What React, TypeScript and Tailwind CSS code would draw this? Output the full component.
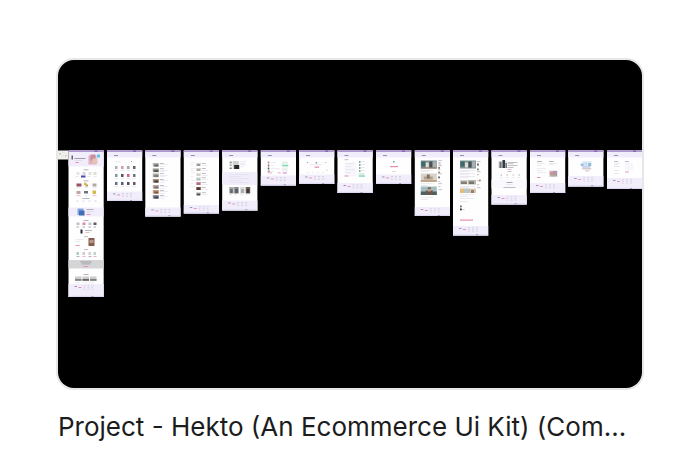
type Mark = [x: number, y: number, w: number, h: number, fill: string];

interface Frame {
  x: number;
  height: number;
  footer: number;
  header?: number;
  marks: Mark[];
}

const INK = "#96959f";
const SOFT = "#dcdbe4";
const PINK = "#e58db4";
const LAV = "#f1edfb";

const dots = (xs: number[], y: number, w: number, h: number, fills: string[]): Mark[] =>
  xs.map((x, i): Mark => [x, y, w, h, fills[i % fills.length]]);

const lines = (x: number, ys: number[], w: number, fill: string): Mark[] =>
  ys.map((y, i): Mark => [x, y, i % 2 ? w * 0.6 : w, 0.6, fill]);

const frames: Frame[] = [
  {
    x: 68.5, height: 146.5, footer: 133.5, header: 16,
    marks: [
      [3, 5, 1.5, 4, "#65636e"], [6, 7.5, 11, 0.9, INK], [6, 9.5, 8, 0.8, SOFT], [7, 11.5, 3.5, 0.9, PINK],
      [20, 5, 8, 9, "#dfb3bd"], [22, 4, 5, 6, "#c78e9f"], [24, 8, 5, 5, "#e9c4b5"], [28.5, 4, 3, 3, "#5cc3ea"],
      [15, 19, 5, 0.7, INK],
      ...dots([8, 14, 20, 25], 21.5, 3, 3, ["#e3e3e8", "#d2d6df", "#e4e1d9", "#d9e0d8"]),
      [12.5, 25, 4.5, 2, "#4a4aae"], ...dots([7, 19, 25], 25.5, 3, 0.6, [SOFT]),
      [15, 30, 5, 0.7, INK],
      [8, 33, 5, 3, "#9b5260"], [15.5, 32, 2.5, 2.5, "#d8bb4f"], [17, 34, 2.5, 2, "#b89d48"], [24, 33, 4, 3, "#b4aba0"],
      [8, 40.5, 4, 3, "#bba7a1"], [15.5, 40.5, 4, 2.5, "#73707c"], [24, 40, 3.5, 3.5, "#d8b74e"],
      ...dots([8, 16, 24], 37, 4, 0.6, [SOFT]), ...dots([8, 16, 24], 45, 4, 0.6, [PINK, SOFT]),
      [14, 47.5, 7, 0.7, INK], ...dots([8, 14, 20, 26], 50, 2, 1.2, [SOFT]),
      [0, 57, 35, 9, LAV], [9, 58, 6, 6.5, "#8aa6df"], [10.5, 60, 5.5, 5, "#416db6"],
      [18, 58.5, 7, 0.7, INK], ...lines(18, [60.5, 62], 7, SOFT), [18, 63.5, 4, 0.9, PINK],
      [15, 69.5, 5, 0.7, INK], ...dots([8, 14, 20, 25], 72, 3, 2.5, ["#bbc3ca", "#df8aa0", "#c2c7ca", "#5f5764"]),
      ...dots([8, 14, 20, 25], 76, 2.5, 1, ["#a9a8b5"]),
      [12, 79, 2, 4, "#292934"], [16.5, 79.5, 7, 0.7, INK], [17, 81.5, 4, 0.8, "#e2b09a"],
      [15.5, 86, 4, 0.6, INK], ...lines(7, [88.5, 90.5], 8, SOFT), [7, 94.5, 4, 0.9, PINK],
      [20, 87.5, 6, 8, "#865c51"], [21, 89.5, 4, 3, "#bd9885"],
      [15.5, 98.5, 4, 0.6, INK], ...dots([8, 14, 20, 25], 101.5, 2.5, 3, ["#a8d0ba", "#d0cdc8", "#d6cfd9", "#bcd5c6"]),
      ...dots([8, 14, 20, 25], 105.5, 3, 0.7, [INK, PINK]),
      [0, 109.5, 35, 8.5, "#d5d5d8"], [12, 111, 11, 0.9, "#9a979e"], [13, 113, 9, 0.8, "#9a979e"], [15, 115.5, 4.5, 0.9, PINK],
      [15, 123.5, 5, 0.7, INK],
      ...dots([6.5, 14, 21.5], 126, 6.5, 4.5, ["#cbcaca"]),
      ...dots([6.5, 14, 21.5], 128.5, 6.5, 1.8, ["#84848a", "#66646b", "#818083"]),
      ...dots([7, 15, 22], 132, 4, 0.6, [SOFT]),
    ],
  },
  {
    x: 107, height: 50.5, footer: 41,
    marks: [
      [8, 11, 6, 0.6, SOFT], [24, 10.5, 1, 1, INK],
      ...dots([8, 14, 20, 26], 15.5, 2.5, 3, ["#abb0b0", "#d39aa2", "#a2a4ae", "#65606c"]),
      ...dots([8, 14, 20, 26], 23.5, 2.5, 3, ["#789c96", "#55505d", "#d45e7d", "#6e737d"]),
      ...dots([8, 14, 20, 26], 31.5, 2.5, 3, ["#65708a", "#545c6e", "#4f525e", "#6b556a"]),
      ...dots([7.5, 13.5, 19.5, 25.5], 19.5, 3.5, 0.6, [SOFT]), ...dots([7.5, 13.5, 19.5, 25.5], 27.5, 3.5, 0.6, [SOFT]),
      ...dots([7.5, 13.5, 19.5, 25.5], 35.5, 3.5, 0.6, [SOFT]),
    ],
  },
  {
    x: 145.3, height: 66, footer: 57,
    marks: [
      ...[12.5, 18, 23, 28.5, 34.5, 39.5, 44.5].flatMap((y, i): Mark[] => [
        [7.5, y, 6, 3.7, ["#b2b5b0", "#8a9492", "#a4b1aa", "#a98d79", "#b9a8a4", "#c39b7c", "#8d8f98"][i]],
        [9, y + 1.5, 4, 2, ["#636762", "#635149", "#80786c", "#423c37", "#7c6d6b", "#7f5b41", "#3e4251"][i]],
        [14.5, y, 4, 0.6, INK], [14.5, y + 1.5, 8, 0.5, SOFT], [14.5, y + 3, 5, 0.5, SOFT],
      ]),
    ],
  },
  {
    x: 183.8, height: 63, footer: 54.5,
    marks: [
      ...lines(7, [12, 14, 18, 20, 22, 26, 30, 33, 36], 4, SOFT),
      ...[12.5, 17.5, 22.5, 27, 31.5, 36.5, 42].flatMap((y, i): Mark[] => [
        [12.5, y, 4.5, 3, ["#cdd3cd", "#d3d0ca", "#e6e2dd", "#cdd3d1", "#c58d97", "#794a39", "#aeadae"][i]],
        [13, y + 1.2, 3.2, 1.6, ["#87918a", "#aaa69f", "#d2cbbb", "#aeb9ba", "#a3727a", "#503930", "#494b4b"][i]],
        [18, y, 4, 0.6, INK], [18, y + 2, 6, 0.5, SOFT],
      ]),
    ],
  },
  {
    x: 222.2, height: 60, footer: 50,
    marks: [
      [7.5, 11, 2, 2, "#8a9092"], [7.5, 14, 2, 1.5, "#a19f9e"], [7.5, 17, 2, 1.5, "#777978"],
      [10.5, 10.5, 6, 8, "#cdd3cc"], [12, 14.5, 5, 4, "#25272b"],
      ...lines(18, [11, 12.5, 14, 16], 6, SOFT), [0, 21.5, 35, 13, LAV],
      ...lines(7, [23.5, 25.5, 27.5, 29.5, 31.5], 20, "#dfdcea"),
      ...dots([7, 12, 18, 23.5], 36.5, 4.5, 6.5, ["#a6aaa8", "#858a90", "#d6d9d7", "#735e50"]),
      ...dots([8, 13, 19, 24.5], 38.5, 2.5, 4, ["#656a6f", "#595860", "#a6a9a8", "#37373b"]),
      ...dots([7, 12, 18, 23.5], 44, 3, 0.6, [SOFT]),
    ],
  },
  {
    x: 260.8, height: 35, footer: 25,
    marks: [
      [7, 11, 1.5, 2, INK], [7, 14, 1.5, 2, "#9c6e68"], [7, 17, 1.5, 2, "#515c55"], [7, 20, 2, 1.5, "#9c9a88"],
      ...lines(10, [12, 15, 18, 21], 5, SOFT), [15, 18, 4, 0.6, SOFT],
      [21, 11, 6, 5, "#ddf3e9"], [21.5, 14.5, 6, 1.3, "#86d7b5"], [21, 17, 6, 4, "#edf0ee"],
      [7, 22, 4, 0.8, PINK], [17, 22, 3, 0.8, PINK], [22, 22, 4, 1, "#b980bd"],
    ],
  },
  {
    x: 299.1, height: 33.5, footer: 24,
    marks: [
      [8, 11.5, 1, 1, INK], [16.5, 11.5, 1.5, 1.5, "#8a9a94"], [26, 11.5, 1, 1, PINK],
      [11, 14, 12, 0.6, SOFT], [15.5, 16, 4.5, 1.3, PINK], [27, 19, 1.5, 1.5, SOFT], ...dots([8, 13, 18, 23], 21.5, 2, 0.6, [SOFT]),
    ],
  },
  {
    x: 337.5, height: 42.5, footer: 32.5,
    marks: [
      [7, 9, 4, 0.6, INK], [7, 12, 12, 14, "#f7f6fc"], ...lines(8, [13, 16, 19, 22], 9, SOFT), [7, 25, 4, 1, PINK],
      ...[10.5, 13.5, 16.5, 19.5].flatMap((y): Mark[] => [[21.5, y, 1.5, 2, "#8fa39b"], [23.5, y, 4, 0.6, SOFT]]),
      [21, 22.5, 6, 3.5, "#d8f0e4"], [21.5, 25, 6, 1.2, "#7dd4ae"],
    ],
  },
  {
    x: 376, height: 33.5, footer: 24,
    marks: [[17, 10.5, 1.5, 1.5, "#7e9e96"], [14, 15.5, 8, 1.2, PINK], [16, 20.5, 4, 0.6, "#e4b9ce"]],
  },
  {
    x: 414.8, height: 65.5, footer: 56.5,
    marks: [
      [6, 10, 16, 8, "#7a9192"], [6.5, 11, 4, 5, "#3f676d"], [11, 12, 3, 5, "#e0dcd6"], [14.5, 11, 3, 6, "#4b5257"], [18, 11, 3.5, 6, "#a9b0af"], [6, 17, 16, 1, "#9c7460"],
      [6, 23, 16, 8.5, "#d9d2c9"], [9, 26, 9, 3, "#b3a08d"], [12, 24, 3, 4, "#7f7469"], [6, 29.5, 16, 2, "#c0a688"],
      [6, 36, 16, 8.5, "#a3bec1"], [6, 41, 16, 3.5, "#4d6064"], [11, 40, 7, 4.5, "#6b5850"], [13, 38, 3, 3, "#c99b82"], [13, 37, 3, 1.2, "#5c3f32"],
      ...lines(6, [19.5, 21, 33, 34.5, 46.5, 48.5], 12, SOFT),
      ...lines(23.5, [10, 12, 15, 19, 23, 31, 33, 36, 39], 3.5, INK), [23.5, 13, 2.5, 0.9, PINK],
      [23.5, 16.5, 1.5, 1.8, "#655d5b"], [23.5, 21, 1.5, 1.8, "#867d6b"], [23.5, 26, 1.5, 1.8, "#40424b"],
    ],
  },
  {
    x: 453, height: 85, footer: 75.5,
    marks: [
      [7, 10, 16, 8, "#7a9192"], [7.5, 11, 4, 5, "#3f676d"], [12, 12, 3, 5, "#e0dcd6"], [15.5, 11, 3, 6, "#4b5257"], [19, 11, 3.5, 6, "#a9b0af"],
      ...lines(7, [19.5, 21, 22.5, 24, 25.5, 27], 15, SOFT),
      [7, 29.5, 7.5, 4.5, "#d1cdc8"], [8, 31, 6, 2.5, "#867d76"], [15, 29.5, 8, 4.5, "#b8b7ab"], [16, 31, 5, 2.5, "#75766f"],
      ...lines(7, [35.5, 36.5], 15, SOFT),
      [7, 38, 4, 4.5, "#e3bb7f"], [11, 38, 6, 4.5, "#b9c4c4"], [17, 38, 6, 4.5, "#dac9b0"], [18, 39.5, 3, 3, "#9b7d70"],
      ...lines(7, [44, 45.5, 47.5, 51], 14, SOFT),
      [7, 55, 1.8, 1.8, "#747078"], [7, 58, 1.8, 1.8, "#292b31"], [9.5, 58.5, 2, 0.7, PINK],
      [7, 69, 13, 1.2, PINK],
      ...lines(24, [11, 15, 21, 24, 30, 34, 37], 3.5, INK), [24, 13, 1.8, 1.8, "#655d5b"], [24, 18, 1.8, 1.8, "#867d6b"], [26, 29, 1.8, 1.8, "#bf8985"],
    ],
  },
  {
    x: 491.5, height: 54, footer: 44.5,
    marks: [
      [7, 10.5, 8, 7, "#d1d5d8"], [8, 11.5, 2, 6, "#6c7077"], [11, 9.5, 2.5, 8, "#35383e"], [14, 12.5, 1.5, 5, "#74777b"],
      ...lines(16, [11.5, 13, 14.5, 16.5], 10, INK), [16, 18.5, 4, 0.7, PINK],
      [16, 20.5, 4, 0.6, INK], ...dots([9, 15, 21, 27], 23.5, 1.5, 2, ["#cbd7dd", "#eed4c4", "#ecd8d3", "#cbded3"]),
      ...dots([8, 14, 20, 26], 26.5, 3, 0.6, [SOFT]), [0, 29, 35, 9, "#faf9fe"], [15, 31.5, 6, 0.8, INK], [15, 33.5, 6, 0.6, SOFT], [12, 36.5, 12, 0.6, INK],
    ],
  },
  {
    x: 530, height: 42.5, footer: 32.5,
    marks: [
      [7, 10.5, 5, 0.7, INK], ...lines(7, [12.5, 14.5], 8, SOFT), [19, 10.5, 5, 0.7, INK], ...lines(19, [12.5, 14], 8, SOFT),
      ...lines(7, [18, 20, 22], 9, SOFT), [7, 26.5, 3.5, 1, PINK],
      [19, 20, 8.5, 6.5, "#e0d2de"], [20, 21, 3, 4, "#cb9492"], [23, 20.5, 4, 5, "#b494b4"], [21, 24.5, 5, 1.5, "#a9b586"],
    ],
  },
  {
    x: 568.2, height: 36, footer: 25.5,
    marks: [
      [14, 10.5, 9, 6, "#e0edf8"], [12.5, 13, 3, 2.5, "#9cc0df"], [16, 12, 3, 3, "#c5deef"], [20, 12.5, 3, 3, "#90bbd2"],
      [14, 16, 8, 1, "#a5b3dc"], [14, 18, 9, 0.7, INK], [17, 20, 4, 0.7, PINK],
    ],
  },
  {
    x: 607, height: 38.5, footer: 27.5,
    marks: [
      [7, 10.5, 4, 0.6, INK], ...lines(7, [12.5, 14, 15.5], 6, SOFT), [18, 10.5, 4, 0.6, INK], [18, 12, 8, 8, "#f7f6fc"],
      [7, 19.5, 5, 0.7, SOFT], [18, 21, 4, 0.9, PINK], [7, 22.5, 5, 0.6, SOFT],
    ],
  },
];

function Artboard({ x, height, footer, header = 7, marks }: Frame) {
  const foot = footer + 2;
  return (
    <g transform={`translate(${x} 150.5)`}>
      <rect width="35.2" height={height} fill="#fefeff" />
      <rect width="35.2" height={header} fill={LAV} />
      <rect width="35.2" height="1.4" fill="#a98ccf" />
      <rect x="26" y="0" width="3" height="1" fill="#6d4b91" />
      {header === 7 && <rect x="7" y="4.6" width="4" height="0.9" fill="#8a86a8" />}
      {marks.map(([mx, my, w, h, fill], i) => (
        <rect key={i} x={mx} y={my} width={w} height={h} fill={fill} />
      ))}
      <rect y={footer} width="35.2" height={height - footer} fill={LAV} />
      <rect x="6" y={foot} width="2.5" height="0.9" fill="#8f8ba8" />
      <rect x="10" y={foot + 1} width="3" height="0.9" fill={PINK} />
      {[15, 19, 23].map((fx) => (
        <g key={fx} fill="#cbc8da">
          <rect x={fx} y={foot - 0.5} width="2" height="0.7" />
          <rect x={fx} y={foot + 1.2} width="1.6" height="0.6" />
          <rect x={fx} y={foot + 2.8} width="2" height="0.6" />
        </g>
      ))}
      <rect y={height - 1.2} width="35.2" height="1.2" fill="#ded9f3" />
      <rect x="23" y={height - 1} width="2" height="0.6" fill="#77718e" />
    </g>
  );
}

export default function App() {
  return (
    <main className="px-[58px] pt-[60px] font-['Inter',sans-serif]">
      <article>
        <div className="overflow-hidden rounded-2xl bg-black ring-2 ring-[#e7e7e7]">
          <svg viewBox="58 60 584 328" className="block w-full" role="img">
            <g transform="translate(58 150.5)">
              <rect width="10" height="9" fill="#f1f1ec" />
              <rect x="1" y="3" width="2" height="0.8" fill={INK} />
              <rect x="4" y="2" width="3" height="0.7" fill={SOFT} />
              <rect x="3" y="5" width="3" height="0.8" fill={SOFT} />
              <rect x="7" y="5" width="1.5" height="0.8" fill={INK} />
            </g>
            {frames.map((frame) => (
              <Artboard key={frame.x} {...frame} />
            ))}
          </svg>
        </div>
        <h2 className="mt-5 truncate text-[26px] leading-[38px] text-[#1c1c1c]">
          Project - Hekto (An Ecommerce Ui Kit) (Com...
        </h2>
      </article>
    </main>
  );
}
